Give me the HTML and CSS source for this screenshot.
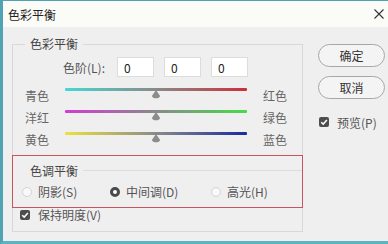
FILE: index.html
```html
<!DOCTYPE html>
<html lang="zh-CN">
<head>
    <meta charset="UTF-8">
    <title>色彩平衡</title>
    <link rel="stylesheet" href="styles.css">
</head>
<body>

<div class="dialog">
    <div class="titlebar">
        <span class="title">色彩平衡</span>
        <svg class="close" width="10" height="10" viewBox="0 0 10 10">
            <path d="M0.5 0.5 L9.5 9.5 M9.5 0.5 L0.5 9.5" stroke="#333" stroke-width="1.1" fill="none"/>
        </svg>
    </div>

    <div class="main">
        <fieldset class="panel">
            <legend>色彩平衡</legend>

            <!-- 色阶 -->
            <div class="levels">
                <span class="levels-label">色阶(L):</span>
                <input class="num" type="text" value="0">
                <input class="num" type="text" value="0">
                <input class="num" type="text" value="0">
            </div>

            <div class="sliders">
                <span class="lbl">青色</span>
                <div class="track"><div class="bar bar-cr"></div><svg class="thumb" width="9" height="9" viewBox="0 0 9 9"><path d="M4.5 0 L8.6 6 A4.2 3 0 0 1 0.4 6 Z" fill="#8c8c8c"/></svg></div>
                <span class="lbl lbl-right">红色</span>

                <span class="lbl">洋红</span>
                <div class="track"><div class="bar bar-mg"></div><svg class="thumb" width="9" height="9" viewBox="0 0 9 9"><path d="M4.5 0 L8.6 6 A4.2 3 0 0 1 0.4 6 Z" fill="#8c8c8c"/></svg></div>
                <span class="lbl lbl-right">绿色</span>

                <span class="lbl">黄色</span>
                <div class="track"><div class="bar bar-yb"></div><svg class="thumb" width="9" height="9" viewBox="0 0 9 9"><path d="M4.5 0 L8.6 6 A4.2 3 0 0 1 0.4 6 Z" fill="#8c8c8c"/></svg></div>
                <span class="lbl lbl-right">蓝色</span>
            </div>

            <!-- 色调平衡 (红框标注) -->
            <div class="tone">
                <div class="tone-head">
                    <span class="tone-title">色调平衡</span>
                    <span class="tone-line"></span>
                </div>
                <div class="radios">
                    <label class="opt"><span class="radio"></span>阴影(S)</label>
                    <label class="opt"><span class="radio on"></span>中间调(D)</label>
                    <label class="opt"><span class="radio"></span>高光(H)</label>
                </div>
            </div>

            <label class="check-row keep">
                <span class="check"><svg width="10" height="10" viewBox="0 0 10 10"><path d="M2.2 5.2 L4.2 7.1 L7.9 3" stroke="#fff" stroke-width="1.5" fill="none"/></svg></span>
                保持明度(V)
            </label>
        </fieldset>

        <div class="side">
            <button class="btn">确定</button>
            <button class="btn btn-cancel">取消</button>
            <label class="check-row preview">
                <span class="check"><svg width="10" height="10" viewBox="0 0 10 10"><path d="M2.2 5.2 L4.2 7.1 L7.9 3" stroke="#fff" stroke-width="1.5" fill="none"/></svg></span>
                预览(P)
            </label>
        </div>
    </div>
</div>

</body>
</html>
```

FILE: styles.css
```css
/* 对话框整体 */
body {
    margin: 0;
    font-family: "Noto Sans CJK SC", "Noto Sans", sans-serif;
    font-size: 12px;
    color: #555;
}

.dialog {
    width: 388px;
    height: 244px;
    box-sizing: border-box;
    border-left: 3px solid #4fa3b3;
    border-top: 1px solid #4fa3b3;
    border-bottom: 3px solid #5cb3c1;
    background-color: #f0eff0;
    display: flex;
    flex-direction: column;
}

.titlebar {
    height: 26px;
    padding: 0 4px 0 5px;
    display: flex;
    align-items: center;
    justify-content: space-between;
    background-color: #fbfbf7;
}

.title {
    color: #222;
    font-size: 12px;
}

.main {
    display: flex;
    padding-top: 9px;
}

/* 色彩平衡 分组 */
.panel {
    margin: 0 0 0 9px;
    padding: 0 0 10px 0;
    width: 291px;
    min-width: 0;
    box-sizing: border-box;
    border: 1px solid #d8d8d8;
}

.panel legend {
    margin-left: 12px;
    padding: 0 5px;
    line-height: 16px;
    color: #444;
}

.levels {
    display: flex;
    align-items: center;
    gap: 10px;
    margin-top: 5px;
    padding-left: 50px;
}

.levels-label {
    width: 47px;
    margin-right: -3px;
    color: #555;
}

.num {
    width: 37px;
    height: 20px;
    box-sizing: border-box;
    border: 1px solid #dcdcdc;
    background-color: #fff;
    padding: 0 0 0 6px;
    font-family: inherit;
    font-size: 12px;
    color: #222;
    outline: none;
}

.sliders {
    display: grid;
    grid-template-columns: 40px 182px auto;
    grid-auto-rows: 22px;
    align-items: center;
    margin-top: 7px;
    padding-left: 12px;
}

.lbl {
    color: #666;
}

.lbl-right {
    margin-left: 16px;
}

.track {
    position: relative;
    height: 14px;
}

.bar {
    height: 3px;
    border-radius: 1px;
}

.bar-cr {
    background: linear-gradient(to right, #45d8d2, #8a8a8a 50%, #cc2f3a);
}

.bar-mg {
    background: linear-gradient(to right, #d23cd2, #8a8a8a 50%, #45dc48);
}

.bar-yb {
    background: linear-gradient(to right, #ece23c, #8a8a8a 50%, #1a2a9e);
}

.thumb {
    position: absolute;
    left: 50%;
    top: 2px;
    transform: translateX(-50%);
}

/* 色调平衡 红框 */
.tone {
    margin: 5px -1px 0 -1px;
    padding: 6px 0 8px 0;
    border: 1px solid #c9535e;
}

.tone-head {
    display: flex;
    align-items: center;
    height: 16px;
    padding-left: 12px;
}

.tone-title {
    padding: 0 5px;
    color: #444;
}

.tone-line {
    flex: 1;
    height: 1px;
    background-color: #dcdcdc;
}

.radios {
    display: grid;
    grid-template-columns: 88px 101px auto;
    margin-top: 5px;
    padding-left: 9px;
    height: 16px;
    align-items: center;
}

.opt {
    display: flex;
    align-items: center;
    gap: 6px;
    color: #555;
}

.radio {
    width: 10px;
    height: 10px;
    box-sizing: border-box;
    border-radius: 50%;
    border: 1px solid #d4d4d4;
    background-color: #f8f8f8;
}

.radio.on {
    border: 3px solid #4a4a4a;
    background-color: #fff;
}

.check-row {
    display: flex;
    align-items: center;
    gap: 8px;
    color: #555;
}

.check {
    width: 10px;
    height: 10px;
    border-radius: 2px;
    background-color: #4d4d4d;
    display: flex;
}

.keep {
    height: 13px;
    margin-left: 7px;
}

/* 右侧按钮 */
.side {
    display: flex;
    flex-direction: column;
    margin-left: 15px;
    width: 67px;
}

.btn {
    margin-top: 8px;
    height: 23px;
    border: 1px solid #a8a8a8;
    border-radius: 12px;
    background-color: #f5f4f5;
    font-family: inherit;
    font-size: 12px;
    color: #333;
    padding: 0;
}

.btn-cancel {
    margin-top: 9px;
}

.preview {
    margin-top: 16px;
    margin-left: 1px;
    height: 14px;
}
```
